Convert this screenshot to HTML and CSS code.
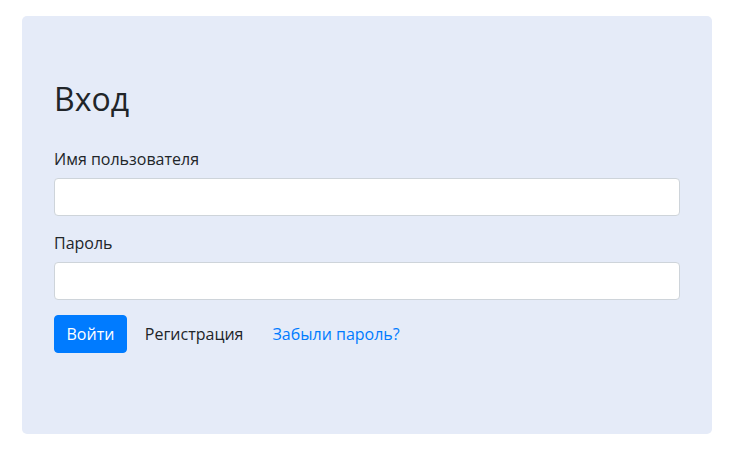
FILE: index.html
```html
<!DOCTYPE html>
<html lang="ru">
<head>
<meta charset="utf-8">
<title>Вход</title>
<link rel="stylesheet" href="styles.css">
</head>
<body>
<div class="page">
  <div class="card">
    <h2 class="title">Вход</h2>
    <form class="form">
      <div class="group">
        <label class="label" for="u">Имя пользователя</label>
        <input class="input" id="u" type="text">
      </div>
      <div class="group">
        <label class="label" for="p">Пароль</label>
        <input class="input" id="p" type="password">
      </div>
      <div class="actions">
        <button class="btn" type="button">Войти</button>
        <a class="reg" href="#">Регистрация</a>
        <a class="forgot" href="#">Забыли пароль?</a>
      </div>
    </form>
  </div>
</div>
</body>
</html>
```

FILE: styles.css
```css
* { box-sizing: border-box; }
html, body { margin: 0; padding: 0; background: #fff; }
body {
  font-family: "Open Sans", "Noto Sans", sans-serif;
  font-size: 16px;
  line-height: 1.5;
  color: #212529;
}
.page {
  padding: 16px 23px 16px 22px;
}
.card {
  background: #e5ebf8;
  border-radius: 5px;
  padding: 64px 32px 60px 32px;
  height: 418px;
}
.title {
  margin: 0 0 29px;
  font-size: 32px;
  font-weight: 400;
  line-height: 1.2;
}
.group { margin-bottom: 15px; }
.label {
  display: block;
  margin-bottom: 7px;
}
.input {
  display: block;
  width: 100%;
  height: 38px;
  border: 1px solid #ced4da;
  border-radius: 4px;
  background: #fff;
  font: inherit;
  padding: 6px 12px;
}
.actions {
  display: flex;
  align-items: center;
  margin-top: 1px;
}
.btn {
  font: inherit;
  color: #fff;
  background: #007bff;
  border: 1px solid #007bff;
  border-radius: 4px;
  padding: 6px 11.5px;
  height: 38px;
}
.reg {
  margin-left: 18px;
  color: #212529;
  text-decoration: none;
}
.forgot {
  margin-left: 29px;
  color: #007bff;
  text-decoration: none;
}
```
